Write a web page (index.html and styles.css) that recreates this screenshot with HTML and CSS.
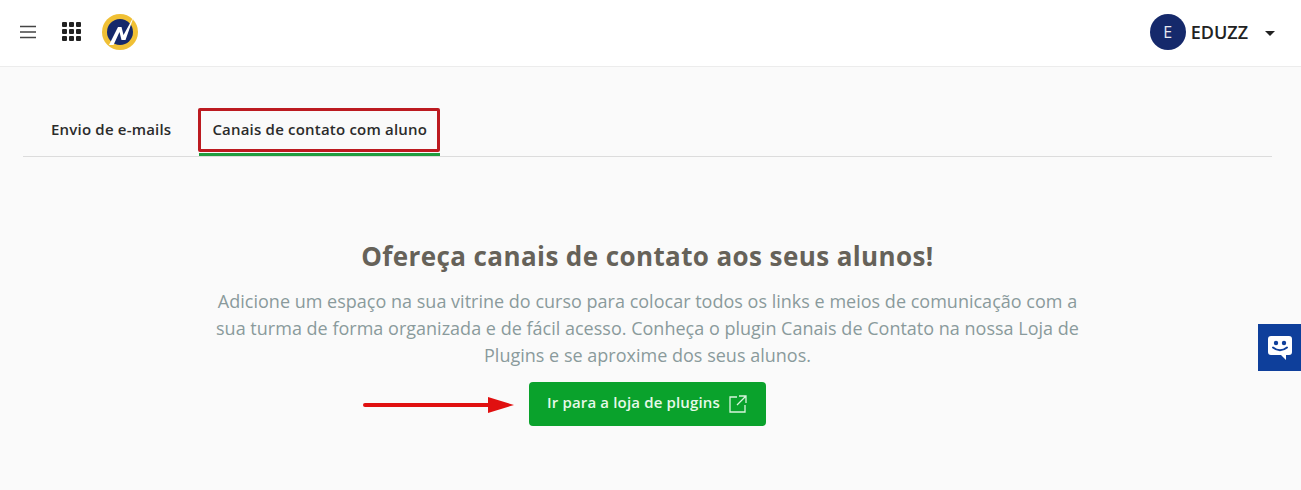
FILE: index.html
```html
<!DOCTYPE html>
<html>
<head>
  <title>Canais de contato</title>
  <link rel="stylesheet" href="styles.css">
</head>
<body>
  <header class="topbar">
    <div class="topbar-left">
      <svg class="icon-menu" width="16" height="14" viewBox="0 0 16 14">
        <path d="M0 1.5H16M0 7H16M0 12.5H16" stroke="#444" stroke-width="1.6" fill="none"/>
      </svg>
      <svg class="icon-apps" width="19" height="19" viewBox="0 0 19 19" fill="#222">
        <rect x="0" y="0" width="5" height="5" rx="1"/>
        <rect x="7" y="0" width="5" height="5" rx="1"/>
        <rect x="14" y="0" width="5" height="5" rx="1"/>
        <rect x="0" y="7" width="5" height="5" rx="1"/>
        <rect x="7" y="7" width="5" height="5" rx="1"/>
        <rect x="14" y="7" width="5" height="5" rx="1"/>
        <rect x="0" y="14" width="5" height="5" rx="1"/>
        <rect x="7" y="14" width="5" height="5" rx="1"/>
        <rect x="14" y="14" width="5" height="5" rx="1"/>
      </svg>
      <svg class="logo" width="38" height="38" viewBox="0 0 38 38">
        <circle cx="19" cy="19" r="18" fill="#f0c035"/>
        <circle cx="19" cy="19" r="13" fill="#15296b"/>
        <path d="M8 32L17 14H20.500L22.500 22L33 3L24.500 27H20.500L18.500 19L12.500 32Z" fill="#fff"/>
      </svg>
    </div>
    <div class="account">
      <div class="avatar">E</div>
      <span class="account-name">EDUZZ</span>
      <span class="caret"></span>
    </div>
  </header>

  <main class="content">
    <nav class="tabs">
      <div class="tab">Envio de e-mails</div>
      <div class="tab tab-active">Canais de contato com aluno</div>
    </nav>

    <section class="promo">
      <h1>Ofereça canais de contato aos seus alunos!</h1>
      <p>Adicione um espaço na sua vitrine do curso para colocar todos os links e meios de comunicação com a sua turma de forma organizada e de fácil acesso. Conheça o plugin Canais de Contato na nossa Loja de Plugins e se aproxime dos seus alunos.</p>
      <div class="btn-row">
        <svg class="arrow" width="152" height="18" viewBox="0 0 152 18">
          <path d="M2 9H126" stroke="#e01010" stroke-width="4" stroke-linecap="round"/>
          <path d="M125 1L151 9L125 17Z" fill="#e01010"/>
        </svg>
        <a class="btn-green">
          <span class="btn-label">Ir para a loja de plugins</span>
          <svg width="18" height="18" viewBox="0 0 18 18" fill="none" stroke="#d8f5dc" stroke-width="1.3">
            <path d="M8 2H1V17H16V10M10 1H17V8M17 1L8 10"/>
          </svg>
        </a>
      </div>
    </section>
  </main>

  <div class="chat-tab">
    <svg width="28" height="28" viewBox="0 0 28 28">
      <path d="M5 2H23A3 3 0 0 1 26 5V18A3 3 0 0 1 23 21H20V26L15 21H5A3 3 0 0 1 2 18V5A3 3 0 0 1 5 2Z" fill="#fff"/>
      <circle cx="10" cy="9" r="2.200" fill="#0e3f9b"/>
      <circle cx="18" cy="9" r="2.200" fill="#0e3f9b"/>
      <path d="M7 13.500Q14 19 21 13.500" stroke="#0e3f9b" stroke-width="2" fill="none" stroke-linecap="round"/>
    </svg>
  </div>
</body>
</html>
```

FILE: styles.css
```css
body {
  margin: 0;
  height: 490px;
  overflow: hidden;
  background-color: #fafafa;
  font-family: "Open Sans", sans-serif;
}
.topbar {
  display: flex;
  justify-content: space-between;
  align-items: center;
  height: 67px;
  box-sizing: border-box;
  padding: 0 26px 3px 20px;
  background-color: white;
  border-bottom: 1px solid #ececec;
}
.topbar-left {
  display: flex;
  align-items: center;
}
.icon-menu {
  margin-right: 26px;
}
.icon-apps {
  margin-right: 20px;
}
.account {
  display: flex;
  align-items: center;
}
.avatar {
  width: 36px;
  height: 36px;
  border-radius: 50%;
  background-color: #15296b;
  color: #e8e8f0;
  font-size: 16px;
  line-height: 36px;
  text-align: center;
}
.account-name {
  margin-left: 5px;
  font-size: 18px;
  font-weight: 600;
  color: #222;
}
.caret {
  margin: 4px 0 0 17px;
  border-left: 5px solid transparent;
  border-right: 5px solid transparent;
  border-top: 5px solid #222;
}
.content {
  padding: 0 29px 0 23px;
}
.tabs {
  display: flex;
  gap: 14px;
  height: 90px;
  box-sizing: border-box;
  padding: 41px 0 0 14px;
  border-bottom: 1px solid #dcdcdc;
}
.tab {
  position: relative;
  height: 48px;
  box-sizing: border-box;
  padding: 0 14px;
  font-size: 15px;
  font-weight: 600;
  letter-spacing: 0.2px;
  line-height: 42px;
  color: #2b2b2b;
}
.tab-active {
  padding: 0 13px;
  border-bottom: 3px solid #1f9d3f;
}
/* red annotation drawn over the screenshot */
.tab-active::before {
  content: "";
  position: absolute;
  left: -1px;
  right: 0;
  top: 0;
  height: 44px;
  box-sizing: border-box;
  border: 3px solid #bc1a20;
  border-radius: 2px;
}
.promo {
  text-align: center;
}
.promo h1 {
  margin: 81px 0 0;
  font-size: 26px;
  line-height: 36px;
  font-weight: 700;
  letter-spacing: 0.4px;
  color: #666259;
}
.promo p {
  width: 880px;
  margin: 14px auto 0;
  font-size: 18px;
  line-height: 27px;
  letter-spacing: 0.01px;
  color: #8a9a9c;
}
.btn-row {
  position: relative;
  display: flex;
  justify-content: center;
  margin-top: 13px;
}
.arrow {
  position: absolute;
  left: 340px;
  top: 14px;
}
.btn-green {
  display: flex;
  align-items: center;
  gap: 9px;
  height: 44px;
  padding: 0 19px 0 18px;
  border-radius: 4px;
  background-color: #0aa22c;
  color: #e6f9e8;
  font-size: 15px;
  font-weight: 600;
}
.btn-label {
  margin-bottom: 4px;
  letter-spacing: 0.16px;
}
.chat-tab {
  position: fixed;
  right: 0;
  top: 324px;
  width: 43px;
  height: 47px;
  display: flex;
  align-items: center;
  justify-content: center;
  background-color: #0e3f9b;
}
```
